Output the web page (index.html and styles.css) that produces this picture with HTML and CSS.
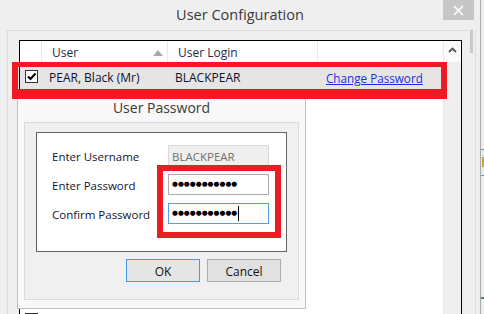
FILE: index.html
```html
<!DOCTYPE html>
<html>
<head>
<meta charset="utf-8">
<link rel="stylesheet" href="styles.css">
</head>
<body>
<div class="screen">
  <div class="window">
    <div class="titlebar">
      <span></span>
      <span class="title">User Configuration</span>
      <span class="close">
        <svg width="11" height="11" viewBox="0 0 11 11"><path d="M1 1L10 10M10 1L1 10" stroke="#fff" stroke-width="1.6"/></svg>
      </span>
    </div>
    <div class="content">
      <div class="panel">
        <div class="list">
          <div class="grid">
            <div class="header">
              <div class="hc c-check"></div>
              <div class="hc c-user">User<svg class="sort" width="10" height="6" viewBox="0 0 10 6"><path d="M0 6L5 0L10 6Z" fill="#a9a9a9"/></svg></div>
              <div class="hc c-login">User Login</div>
              <div class="hc c-rest"></div>
            </div>
            <div class="row selected">
              <div class="c-check"><span class="checkbox"><svg width="11" height="11" viewBox="0 0 11 11"><path d="M2 5.5L4.5 8L9.5 2.5" stroke="#000" stroke-width="2.2" fill="none"/></svg></span></div>
              <div class="c-user">PEAR, Black (Mr)</div>
              <div class="c-login">BLACKPEAR</div>
              <div class="c-rest"><a class="link">Change Password</a></div>
            </div>
            <div class="row"><div class="c-check"><span class="checkbox"></span></div></div>
            <div class="row"><div class="c-check"><span class="checkbox"></span></div></div>
            <div class="row"><div class="c-check"><span class="checkbox"></span></div></div>
            <div class="row"><div class="c-check"><span class="checkbox"></span></div></div>
            <div class="row"><div class="c-check"><span class="checkbox"></span></div></div>
            <div class="row"><div class="c-check"><span class="checkbox"></span></div></div>
            <div class="row"><div class="c-check"><span class="checkbox"></span></div></div>
            <div class="row"><div class="c-check"><span class="checkbox"></span></div></div>
            <div class="row"><div class="c-check"><span class="checkbox"></span></div></div>
          </div>
          <div class="vscroll">
            <div class="vs-up"><svg width="9" height="6" viewBox="0 0 9 6"><path d="M1 5L4.5 1.5L8 5" stroke="#555" stroke-width="1.8" fill="none"/></svg></div>
            <div class="vs-track"></div>
          </div>
        </div>
      </div>
      <div class="outer-scroll"><div class="thumb"></div></div>
    </div>
  </div>
  <div class="behind">
    <div class="bh-item"><span class="bh-mark"></span></div>
    <div class="bh-line"></div>
  </div>

  <div class="dialog">
    <div class="dlg-title">User Password</div>
    <div class="dlg-panel">
      <div class="form-box">
        <div class="frow">
          <span class="label">Enter Username</span>
          <span class="field readonly">BLACKPEAR</span>
        </div>
        <div class="frow">
          <span class="label">Enter Password</span>
          <span class="field"><span class="dots">●●●●●●●●●●●</span></span>
        </div>
        <div class="frow">
          <span class="label">Confirm Password</span>
          <span class="field focus"><span class="dots">●●●●●●●●●●●</span><span class="caret"></span></span>
        </div>
      </div>
      <div class="buttons">
        <span class="btn default">OK</span>
        <span class="btn">Cancel</span>
      </div>
    </div>
  </div>

  <div class="mark mark-row"></div>
  <div class="mark mark-fields"></div>
</div>
</body>
</html>
```
FILE: styles.css
```css
* { box-sizing: border-box; }
html, body { margin: 0; padding: 0; }
body {
  width: 484px;
  height: 314px;
  overflow: hidden;
  background: #efefef;
  font-family: "Open Sans", "Noto Sans", sans-serif;
  color: #1c1c2c;
}
.screen {
  position: relative;
  width: 484px;
  height: 314px;
  overflow: hidden;
  display: flex;
}
.window {
  width: 480px;
  height: 314px;
  background: #efefef;
  display: flex;
  flex-direction: column;
}
.titlebar {
  height: 30px;
  flex: none;
  display: grid;
  grid-template-columns: 1fr auto 1fr;
  align-items: start;
}
.title {
  font-size: 14.5px;
  color: #3a3a3a;
  line-height: 30px;
}
.close {
  justify-self: end;
  margin-right: 6px;
  width: 31px;
  height: 20px;
  background: #c6c6c6;
  display: flex;
  align-items: center;
  justify-content: center;
}
.content {
  height: 284px;
  overflow: hidden;
  display: flex;
  padding-left: 7px;
}
.panel {
  width: 461px;
  border-top: 1px solid #dcdcdc;
  border-left: 1px solid #dcdcdc;
  padding: 9px 0 0 11px;
  display: flex;
}
.list {
  width: 443px;
  border: 1px solid #000;
  border-bottom: none;
  background: #fff;
  display: flex;
  overflow: hidden;
}
.grid {
  width: 423px;
  display: flex;
  flex-direction: column;
  overflow: hidden;
}
.header {
  height: 21px;
  flex: none;
  display: flex;
  background: #fff;
}
.hc {
  height: 21px;
  font-size: 12px;
  line-height: 24px;
  color: #1e2a48;
  border-right: 1px solid #e8e8e8;
}
.c-check { width: 22px; flex: none; }
.c-user { width: 126px; flex: none; }
.c-login { width: 150px; flex: none; }
.c-rest { flex: 1; }
.hc.c-user { padding-left: 10px; position: relative; }
.hc.c-login { padding-left: 10px; }
.hc.c-rest { border-right: none; }
.sort { position: absolute; left: 111px; top: 9px; }
.row {
  height: 27px;
  flex: none;
  display: flex;
  align-items: center;
  font-size: 12px;
  color: #10102a;
}
.row.selected { background: #e5e5e5; }
.row .c-check { padding-left: 5px; display: flex; align-items: center; }
.row .c-user { padding-left: 7px; padding-top: 4px; }
.row .c-login { padding-left: 7px; padding-top: 4px; }
.row .c-rest { padding-left: 8px; padding-top: 4px; font-size: 11.7px; }
.checkbox {
  width: 13px;
  height: 13px;
  border: 1px solid #333;
  background: #fff;
  display: flex;
  align-items: center;
  justify-content: center;
  margin-top: 2px;
}
.link { color: #1a2fe0; text-decoration: underline; }
.vscroll {
  width: 18px;
  border-left: 1px solid #e8e8e8;
  display: flex;
  flex-direction: column;
}
.vs-up {
  height: 21px;
  background: #fafafa;
  display: flex;
  justify-content: center;
  padding-top: 6px;
}
.vs-track { flex: 1; background: #efefef; }
.outer-scroll {
  width: 7px;
  margin-left: 1px;
  border-right: 1px solid #dedede;
  padding-left: 1px;
}
.thumb { width: 3px; height: 23px; background: #c9c9c9; }
.behind {
  flex: 1;
  border-left: 1px solid #a9a9a9;
  display: flex;
  flex-direction: column;
  padding-top: 149px;
}
.bh-item {
  height: 27px;
  border-top: 1px solid #8c8c8c;
  border-bottom: 1px solid #8c8c8c;
  background: #e3ebf7;
  padding: 7px 0 0 1px;
}
.bh-mark { display: block; width: 2px; height: 10px; background: #c9a628; }
.bh-line { margin-top: 121px; height: 2px; background: #4a74c9; }

/* dialog window */
.dialog {
  position: absolute;
  left: 17px;
  top: 92px;
  width: 289px;
  height: 217px;
  border: 1px solid #c2c2c2;
  background: #f8f8f8;
  padding: 0 6px 8px 6px;
  display: flex;
  flex-direction: column;
}
.dlg-title {
  height: 29px;
  text-align: center;
  font-size: 14px;
  line-height: 29px;
  color: #3a3a3a;
}
.dlg-panel {
  flex: 1;
  border: 1px solid #dadada;
  background: #f0f0f0;
  padding: 9px 11px 0 11px;
  display: flex;
  flex-direction: column;
}
.form-box {
  height: 120px;
  border: 1px solid #646464;
  background: #fff;
  padding: 12px 17px 0 15px;
  display: flex;
  flex-direction: column;
  gap: 8px;
}
.frow {
  height: 21px;
  display: flex;
  align-items: center;
  justify-content: space-between;
}
.label { font-size: 11.5px; color: #141430; padding-top: 2px; }
.field {
  width: 101px;
  height: 21px;
  border: 1px solid #ababab;
  background: #fff;
  display: flex;
  align-items: center;
  padding-left: 3px;
}
.field.readonly {
  background: #efefef;
  border-color: #d9d9d9;
  color: #707070;
  font-size: 11.5px;
  padding-top: 2px;
}
.field.focus { border-color: #569de5; }
.dots {
  font-family: "DejaVu Sans", sans-serif;
  font-size: 6.8px;
  letter-spacing: 0;
  color: #000;
  line-height: 1;
}
.caret { width: 1px; height: 15px; background: #000; margin-left: 1px; }
.buttons {
  margin-top: 7px;
  display: flex;
  justify-content: flex-end;
  gap: 7px;
  padding-right: 6px;
}
.btn {
  width: 74px;
  height: 23px;
  border: 1px solid #adadad;
  background: #e1e1e1;
  font-size: 12px;
  color: #111;
  display: flex;
  align-items: center;
  justify-content: center;
  padding-top: 2px;
}
.btn.default { border-color: #4a9ae2; background: #e5e5e5; }

/* annotation marks */
.mark {
  position: absolute;
  border: 5px solid #ed1c24;
}
.mark-row { left: 12px; top: 62px; width: 435px; height: 37px; border-left-width: 6px; border-right-width: 6px; border-bottom-width: 10px; }
.mark-fields { left: 157px; top: 165px; width: 124px; height: 73px; border-width: 6px; }
```
